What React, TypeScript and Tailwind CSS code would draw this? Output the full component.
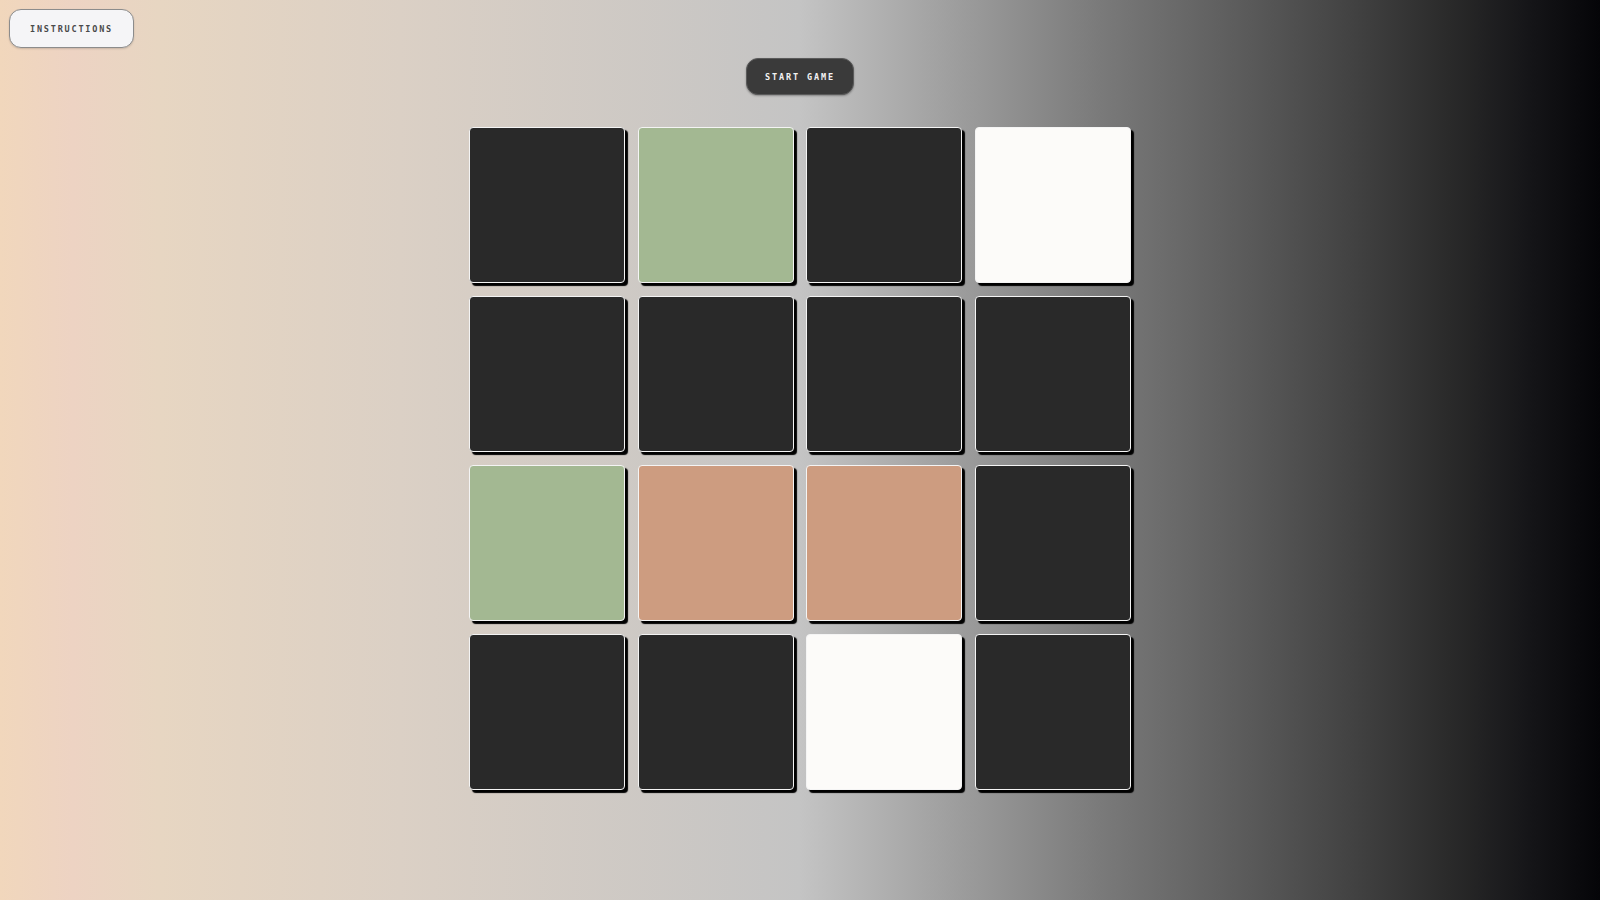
import React from "react";

const tiles = [
  "dark", "green", "dark", "white",
  "dark", "dark", "dark", "dark",
  "green", "peach", "peach", "dark",
  "dark", "dark", "white", "dark",
];

const colorClass: Record<string, string> = {
  dark: "bg-[#292929]",
  green: "bg-[#a3b892]",
  peach: "bg-[#cd9c80]",
  white: "bg-[#fcfbf9]",
};

export default function App() {
  return (
    <div
      className="min-h-screen w-full bg-[linear-gradient(to_right,#f1d7bc_0%,#edd3c3_4.5%,#e7d6c2_10%,#dbd0c5_25%,#c4c4c4_50%,#7a7a7a_68.75%,#5a5a5a_78%,#444444_84%,#2a2a2a_90.6%,#151518_95.6%,#050508_100%)] px-[9px] pt-[9px] pb-10"
      style={{ fontFamily: '"DejaVu Sans Mono", "Liberation Mono", monospace' }}
    >
      <div className="flex">
        <button className="h-[39px] w-[125px] rounded-[12px] border border-[#8c8c8c] bg-[#f5f5f7] pt-[1px] text-[8.5px] font-bold uppercase tracking-[1.8px] text-[#4a4a4a] shadow-[0_1px_2px_rgba(0,0,0,0.15)]">
          Instructions
        </button>
      </div>
      <div className="mt-[10px] flex justify-center">
        <button className="h-[37px] w-[108px] rounded-[12px] border border-[#5a5a5a] bg-[#3a3a3a] pt-[1px] text-[8.5px] font-bold uppercase tracking-[1.9px] text-[#f2f2f2] shadow-[0_1px_2px_rgba(0,0,0,0.3)]">
          Start Game
        </button>
      </div>
      <div className="mt-[32px] flex justify-center">
        <div className="grid grid-cols-[repeat(4,156px)] gap-x-[12.5px] gap-y-[13px]">
          {tiles.map((t, i) => (
            <div
              key={i}
              className={`h-[156px] w-[156px] rounded-[4px] border border-[#f4f4f4] ${colorClass[t]} shadow-[3px_3px_1px_#000]`}
            />
          ))}
        </div>
      </div>
    </div>
  );
}
